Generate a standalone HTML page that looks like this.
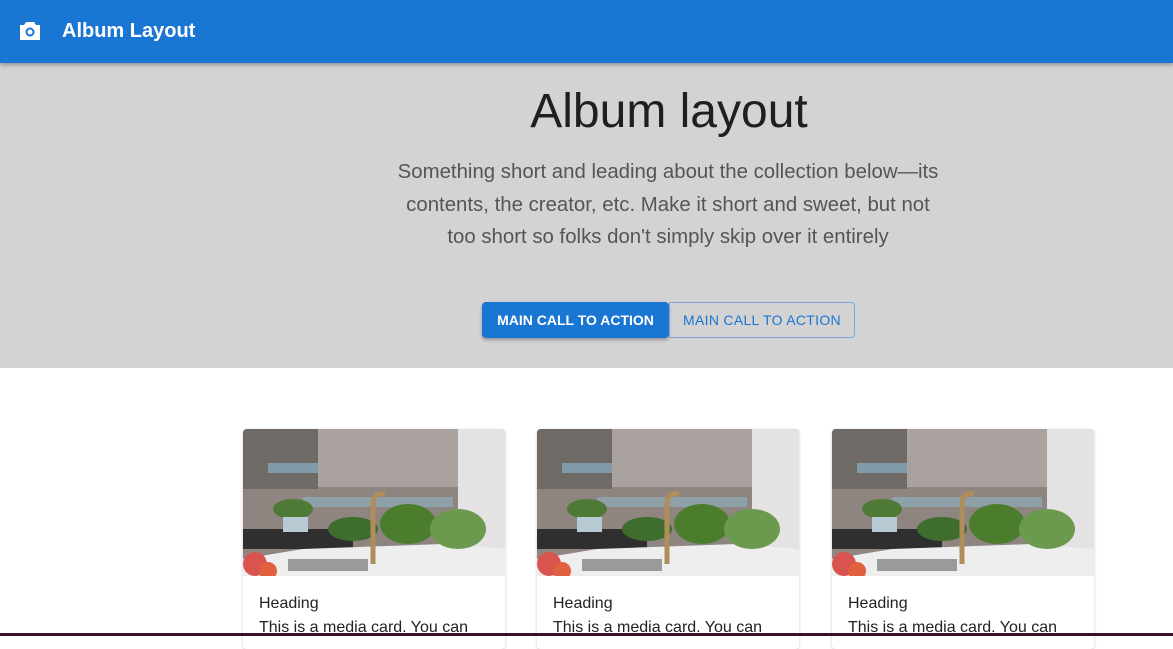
<!DOCTYPE html>
<html><head><style>
*{margin:0;padding:0;box-sizing:border-box}
body{width:1173px;height:636px;overflow:hidden;font-family:"Liberation Sans",sans-serif;background:#fff;position:relative}
.bar{position:absolute;left:0;top:0;width:1173px;height:63px;background:#1976d2;box-shadow:0 2px 4px rgba(0,0,0,.3);z-index:2}
.bar .t{position:absolute;left:62px;top:20px;color:#fff;font-size:20px;font-weight:bold}
.hero{position:absolute;left:0;top:63px;width:1173px;height:305px;background:#d3d3d3}
h1{position:absolute;left:0;width:1338px;top:84px;text-align:center;font-weight:normal;font-size:48px;color:#1f1f1f}
.p{position:absolute;left:391px;width:554px;top:156px;text-align:center;font-size:20.4px;line-height:32.5px;color:#555}
.b1{position:absolute;left:482px;top:302px;width:187px;height:36px;background:#1976d2;color:#fff;font-size:14px;font-weight:bold;text-align:center;line-height:36px;border-radius:4px;box-shadow:0 2px 3px rgba(0,0,0,.3)}
.b2{position:absolute;left:669px;top:302px;width:186px;height:36px;border:1px solid #7fa6d8;color:#1976d2;font-size:14px;text-align:center;line-height:34px;border-radius:0 4px 4px 0;letter-spacing:.3px}
.card{position:absolute;top:429px;width:262px;height:220px;border-radius:4px;box-shadow:0 1px 3px rgba(0,0,0,.2);overflow:hidden;background:#fff}
.card svg{display:block}
.card .h{position:absolute;left:16px;top:166px;font-size:16px;color:#222}
.card .d{position:absolute;left:16px;top:190px;font-size:16px;color:#222;white-space:nowrap}
.line{position:absolute;left:0;top:633px;width:1173px;height:3px;background:#3a1030}
</style></head><body>
<div class="bar">
<svg style="position:absolute;left:19px;top:21px" width="22" height="20" viewBox="0 0 22 20"><path d="M7 1h8l2 3h4v15H1V4h4z" fill="#fff"/><circle cx="11" cy="11" r="4.5" fill="#1976d2"/><circle cx="11" cy="11" r="2.5" fill="#fff"/></svg>
<div class="t">Album Layout</div></div>
<div class="hero"></div>
<h1>Album layout</h1>
<div class="p">Something short and leading about the collection below—its contents, the creator, etc. Make it short and sweet, but not too short so folks don't simply skip over it entirely</div>
<div class="b1">MAIN CALL TO ACTION</div>
<div class="b2">MAIN CALL TO ACTION</div>
<div class="card" style="left:243px"><svg width="262" height="147"><use href="#img"/></svg><div class="h">Heading</div><div class="d">This is a media card. You can</div></div>
<div class="card" style="left:537px"><svg width="263" height="147"><use href="#img"/></svg><div class="h">Heading</div><div class="d">This is a media card. You can</div></div>
<div class="card" style="left:832px"><svg width="262" height="147"><use href="#img"/></svg><div class="h">Heading</div><div class="d">This is a media card. You can</div></div>
<svg width="0" height="0" style="position:absolute"><defs><g id="img">
<rect width="263" height="147" fill="#8e8580"/>
<rect x="0" y="0" width="75" height="60" fill="#6f6a66"/>
<rect x="75" y="0" width="150" height="58" fill="#aaa29f"/>
<rect x="215" y="0" width="48" height="147" fill="#e4e2e3"/>
<rect x="25" y="34" width="50" height="10" fill="#7f9aa8"/>
<rect x="60" y="68" width="150" height="10" fill="#8ea0a8"/>
<rect x="0" y="100" width="110" height="20" fill="#2f2f2f"/>
<polygon points="0,147 0,130 60,120 200,115 263,120 263,147" fill="#eeeeee"/>
<rect x="45" y="130" width="80" height="12" fill="#9a9a9a"/>
<ellipse cx="110" cy="100" rx="25" ry="12" fill="#3f6d2e"/>
<ellipse cx="165" cy="95" rx="28" ry="20" fill="#4c7d2d"/>
<ellipse cx="215" cy="100" rx="28" ry="20" fill="#6b9a4f"/>
<ellipse cx="50" cy="80" rx="20" ry="10" fill="#4e7a35"/>
<rect x="40" y="88" width="25" height="15" fill="#b7c9d3"/>
<path d="M130 135 V75 q0-12 12-10" stroke="#b08d5a" stroke-width="5" fill="none"/>
<circle cx="12" cy="135" r="12" fill="#d9534f"/><circle cx="25" cy="142" r="9" fill="#e06040"/>
</g></defs></svg>
<div class="line"></div>
</body></html>
